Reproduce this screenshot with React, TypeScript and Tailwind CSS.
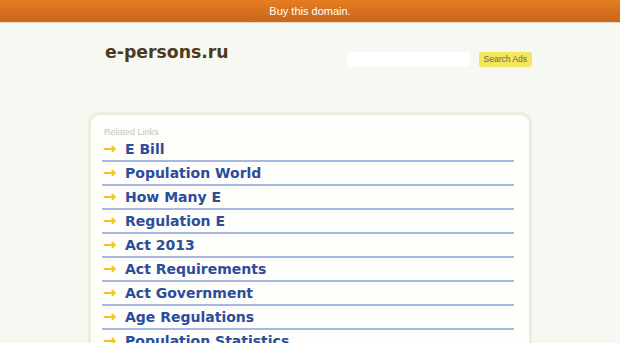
const links = [
  "E Bill",
  "Population World",
  "How Many E",
  "Regulation E",
  "Act 2013",
  "Act Requirements",
  "Act Government",
  "Age Regulations",
  "Population Statistics",
];

export default function App() {
  return (
    <div className="h-[343px] w-[620px] overflow-hidden bg-[#f8f8f2] font-['DejaVu_Sans',sans-serif]">
      <div className="flex h-[22px] items-center justify-center bg-gradient-to-b from-[#e67d22] to-[#c9661c] font-['Liberation_Sans',Arial,sans-serif] text-[11px] text-white shadow-[0_1px_0_#e8d8c0]">
        Buy this domain.
      </div>

      <div className="flex h-[90px] items-start pl-[105px] pr-[88px] pt-[18px]">
        <h1 className="text-[17.3px] font-bold leading-[24px] text-[#4a3a1e]">e-persons.ru</h1>
        <div className="ml-auto mt-[12px] flex items-center gap-[9px]">
          <div className="h-[15px] w-[123px] rounded-[3px] bg-white" />
          <button className="h-[15px] rounded-[3px] bg-[#f2e75c] px-[5px] font-['Liberation_Sans',Arial,sans-serif] text-[8.5px] leading-[15px] text-[#6b6b45]">
            Search Ads
          </button>
        </div>
      </div>

      <div className="ml-[88px] w-[444px] rounded-t-[12px] border-[3px] border-b-0 border-[#ecedde] bg-[#fdfdf9] pl-[11px] pr-[15px] pt-[11px]">
        <p className="pl-[2px] font-['Liberation_Sans',Arial,sans-serif] text-[9px] leading-[12px] text-[#c6c6c6]">
          Related Links
        </p>
        <ul>
          {links.map((l) => (
            <li key={l} className="flex h-[24px] items-center border-b-2 border-[#a9b8e2] pl-[1px]">
              <span className="w-[22px] text-[16px] font-bold leading-none text-[#f2c21a]">→</span>
              <span className="text-[14px] font-bold leading-none text-[#2c4c9c]">{l}</span>
            </li>
          ))}
        </ul>
      </div>
    </div>
  );
}
